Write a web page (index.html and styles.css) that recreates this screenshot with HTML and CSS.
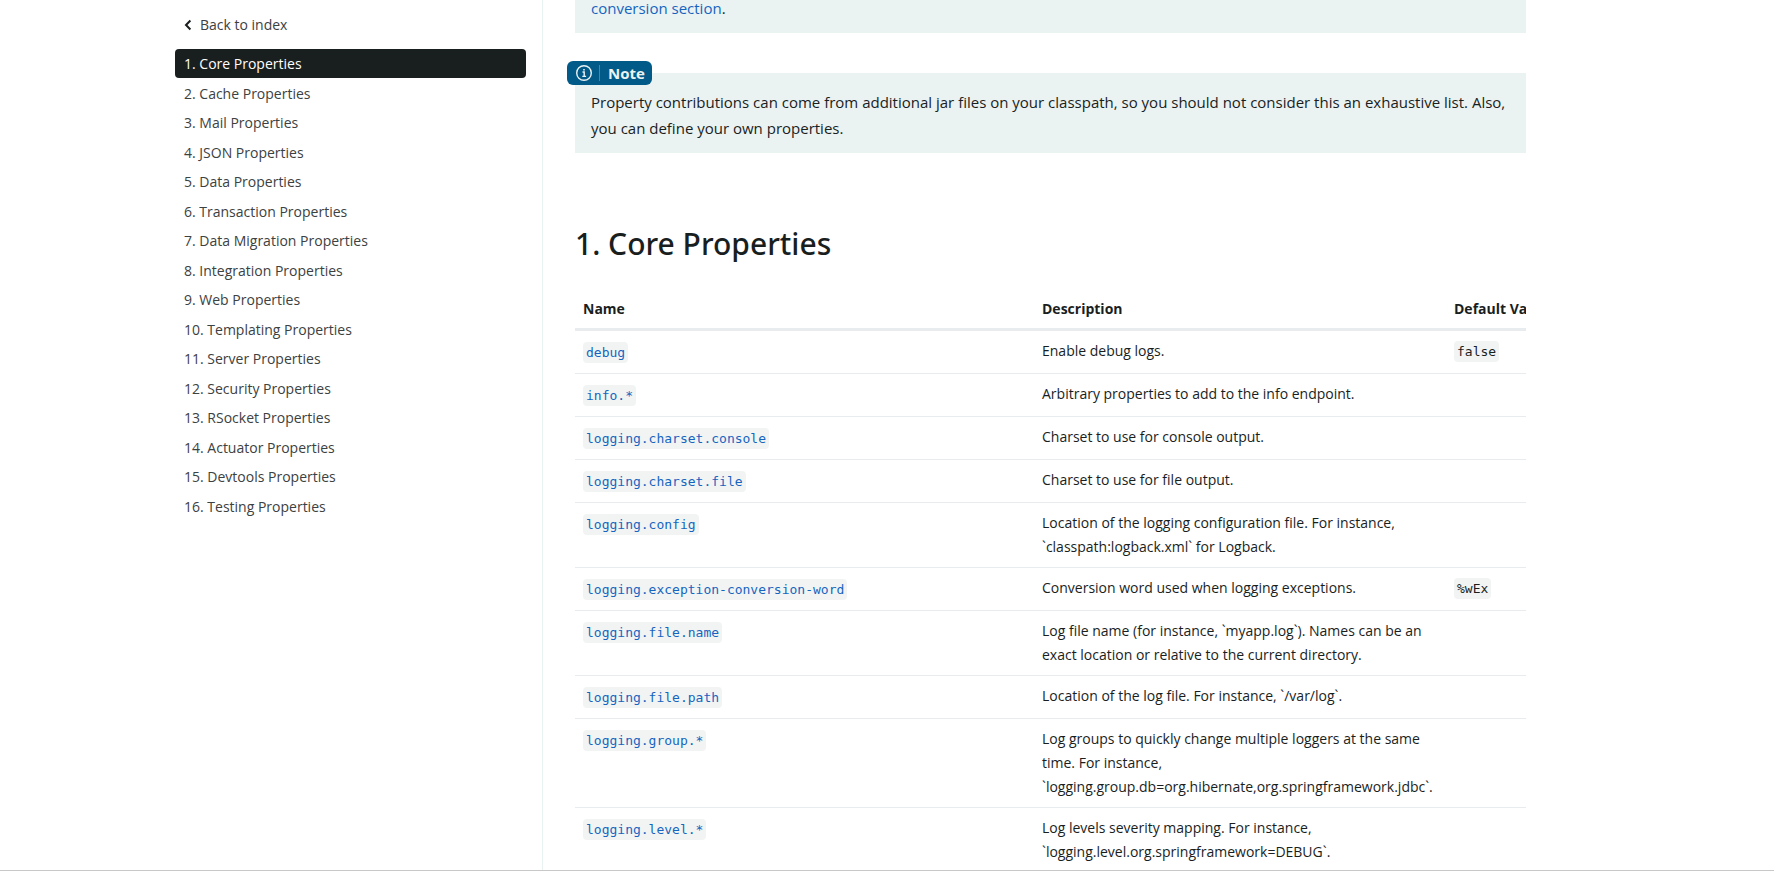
FILE: index.html
```html
<!DOCTYPE html>
<html lang="en">
<head>
<meta charset="utf-8">
<title>Common Application Properties</title>
<link rel="stylesheet" href="styles.css">
</head>
<body>
<div class="page">
  <nav class="sidebar" aria-label="Contents">
    <a class="back" href="#index">
      <svg class="back-icon" viewBox="0 0 8 12" aria-hidden="true"><path d="M6.4 1.5 2 6l4.400 4.500"/></svg>
      Back to index
    </a>
    <ul class="toc">
      <li><a class="toc-link toc-link--active" href="#core">1. Core Properties</a></li>
      <li><a class="toc-link" href="#cache">2. Cache Properties</a></li>
      <li><a class="toc-link" href="#mail">3. Mail Properties</a></li>
      <li><a class="toc-link" href="#json">4. JSON Properties</a></li>
      <li><a class="toc-link" href="#data">5. Data Properties</a></li>
      <li><a class="toc-link" href="#transaction">6. Transaction Properties</a></li>
      <li><a class="toc-link" href="#migration">7. Data Migration Properties</a></li>
      <li><a class="toc-link" href="#integration">8. Integration Properties</a></li>
      <li><a class="toc-link" href="#web">9. Web Properties</a></li>
      <li><a class="toc-link" href="#templating">10. Templating Properties</a></li>
      <li><a class="toc-link" href="#server">11. Server Properties</a></li>
      <li><a class="toc-link" href="#security">12. Security Properties</a></li>
      <li><a class="toc-link" href="#rsocket">13. RSocket Properties</a></li>
      <li><a class="toc-link" href="#actuator">14. Actuator Properties</a></li>
      <li><a class="toc-link" href="#devtools">15. Devtools Properties</a></li>
      <li><a class="toc-link" href="#testing">16. Testing Properties</a></li>
    </ul>
  </nav>
  <main class="content">
    <div class="note note--scrolled"><p><a href="#conversion">conversion section</a>.</p></div>
    <div class="note">
      <div class="badge">
        <svg class="badge-icon" viewBox="0 0 16 16" aria-hidden="true">
          <circle cx="8" cy="8" r="7.300"/>
          <path d="M6.500 7h1.700v4.300M6.300 11.400h3.800"/>
          <path class="badge-dot" d="M7.200 3.900h1.600v1.600H7.200z"/>
        </svg>
        <span class="badge-label">Note</span>
      </div>
      <p>Property contributions can come from additional jar files on your classpath, so you should not consider this an exhaustive list. Also, you can define your own properties.</p>
    </div>
    <h1 class="title" id="core">1. Core Properties</h1>
    <div class="table-wrap">
      <table class="props">
        <colgroup><col class="col-name"><col class="col-desc"><col class="col-default"></colgroup>
        <thead><tr><th>Name</th><th>Description</th><th>Default Value</th></tr></thead>
        <tbody>
          <tr><td><a href="#p1"><code>debug</code></a></td><td>Enable debug logs.</td><td><code>false</code></td></tr>
          <tr><td><a href="#p2"><code>info.*</code></a></td><td>Arbitrary properties to add to the info endpoint.</td><td></td></tr>
          <tr><td><a href="#p3"><code>logging.charset.console</code></a></td><td>Charset to use for console output.</td><td></td></tr>
          <tr><td><a href="#p4"><code>logging.charset.file</code></a></td><td>Charset to use for file output.</td><td></td></tr>
          <tr><td><a href="#p5"><code>logging.config</code></a></td><td>Location of the logging configuration file. For instance, `classpath:logback.xml` for Logback.</td><td></td></tr>
          <tr><td><a href="#p6"><code>logging.exception-conversion-word</code></a></td><td>Conversion word used when logging exceptions.</td><td><code>%wEx</code></td></tr>
          <tr><td><a href="#p7"><code>logging.file.name</code></a></td><td>Log file name (for instance, `myapp.log`). Names can be an exact location or relative to the current directory.</td><td></td></tr>
          <tr><td><a href="#p8"><code>logging.file.path</code></a></td><td>Location of the log file. For instance, `/var/log`.</td><td></td></tr>
          <tr><td><a href="#p9"><code>logging.group.*</code></a></td><td>Log groups to quickly change multiple loggers at the same time. For instance, `logging.group.db=org.hibernate,org.springframework.jdbc`.</td><td></td></tr>
          <tr><td><a href="#p10"><code>logging.level.*</code></a></td><td>Log levels severity mapping. For instance, `logging.level.org.springframework=DEBUG`.</td><td></td></tr>
        </tbody>
      </table>
    </div>
  </main>
</div>
</body>
</html>
```
FILE: styles.css
```css
* {
  box-sizing: border-box;
}

body {
  margin: 0;
  background: #fff;
  color: #191e1e;
  font-family: "Open Sans", "Noto Sans", sans-serif;
  font-size: 15px;
  line-height: 26px;
  border-bottom: 1px solid #c8c8c8;
  height: 100vh;
  overflow: hidden;
}

a {
  color: #1565c0;
  text-decoration: none;
}

p {
  margin: 0;
}

.page {
  display: grid;
  grid-template-columns: 376px minmax(0, 1fr);
  max-width: 1440px;
  height: 100%;
  margin: 0 auto;
  overflow: hidden;
}

/* Sidebar */
.sidebar {
  padding: 12px 16px 0 8px;
  border-right: 1px solid #e9f1f1;
  font-size: 14px;
}

.back {
  display: flex;
  align-items: center;
  gap: 8px;
  padding-left: 9px;
  line-height: 25px;
  color: #3c4141;
}

.back-icon {
  width: 8px;
  height: 12px;
  fill: none;
  stroke: #191e1e;
  stroke-width: 2;
}

.toc {
  display: grid;
  grid-auto-rows: 1fr;
  min-height: 472px;
  margin: 12px 0 0;
  padding: 0;
  list-style: none;
}

.toc-link {
  display: block;
  padding: 0 9px;
  border-radius: 4px;
  line-height: 29px;
  color: #3c4141;
}

.toc-link--active {
  background: #191e1e;
  color: #fff;
}

/* Content */
.content {
  padding: 0 81px 0 32px;
  overflow: hidden;
}

.note {
  position: relative;
  margin-top: 40px;
  padding: 16px 16px 12px;
  background: #ebf2f2;
}

.note--scrolled {
  margin-top: -21px;
}

.badge {
  position: absolute;
  top: -12px;
  left: -8px;
  display: flex;
  align-items: center;
  height: 24px;
  padding: 0 7px 0 9px;
  border-radius: 6px;
  background: #015a88;
  color: #ebf2f2;
  font-weight: 700;
}

.badge-icon {
  width: 16px;
  height: 16px;
  margin-right: 7px;
  fill: none;
  stroke: #ebf2f2;
  stroke-width: 1.4;
}

.badge-dot {
  fill: #ebf2f2;
  stroke: none;
}

.badge-label {
  padding-left: 8px;
  border-left: 1px solid #4686a6;
  line-height: 16px;
}

.title {
  margin: 69px 0 25px;
  font-family: "Noto Sans", "Open Sans", sans-serif;
  font-size: 30px;
  font-weight: 500;
  line-height: 44px;
}

.table-wrap {
  overflow: hidden;
}

.props {
  width: 1024px;
  table-layout: fixed;
  border-collapse: separate;
  border-spacing: 0;
  font-size: 14px;
  line-height: 24px;
}

.col-name {
  width: 459px;
}

.col-desc {
  width: 412px;
}

.props th {
  padding: 6px 8px 7px;
  border-bottom: 3px solid #e9ecef;
  text-align: left;
  font-weight: 700;
}

.props td {
  padding: 8px;
  border-bottom: 1px solid #e9ecef;
  vertical-align: top;
}

.props td:first-child {
  line-height: 25px;
}

.props code {
  padding: 3px;
  border-radius: 4px;
  background: #f2f4f4;
  font-family: "DejaVu Sans Mono", monospace;
  font-size: 13px;
}
```
